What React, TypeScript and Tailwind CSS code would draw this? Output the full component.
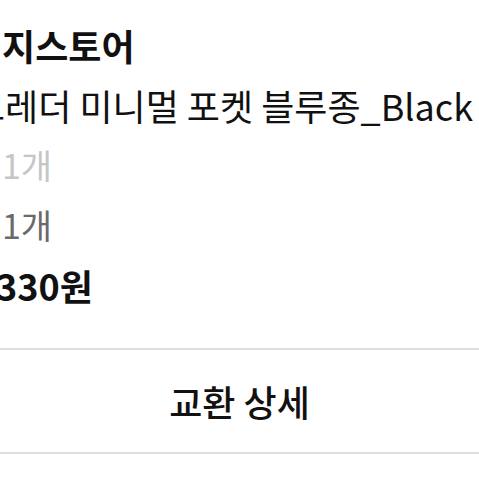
export default function App() {
  return (
    <div className="w-[479px] h-[479px] overflow-hidden bg-white font-['Noto_Sans_CJK_KR','Noto_Sans',sans-serif]">
      {/* order summary, clipped on the left like the capture */}
      <div className="pt-[15px] text-[36px] leading-[60px] whitespace-nowrap">
        <p className="-ml-[31px] font-bold text-[#111]">디지스토어</p>
        <p className="-ml-[28px] text-[#111]">크레더 미니멀 포켓 블루종_Black</p>
        <p className="pl-[2px] text-[34px] text-[#c6c6c6]">1개</p>
        <p className="pl-[2px] text-[34px] text-[#6a6a6a]">1개</p>
        <p className="-ml-[37px] font-bold text-[#111]">8,330원</p>
      </div>

      {/* exchange details button */}
      <div className="mt-[33px] border-y-2 border-[#dedede]">
        <button className="w-full h-[102px] flex items-center justify-center text-[36px] font-medium text-[#111]">
          교환 상세
        </button>
      </div>
    </div>
  );
}
